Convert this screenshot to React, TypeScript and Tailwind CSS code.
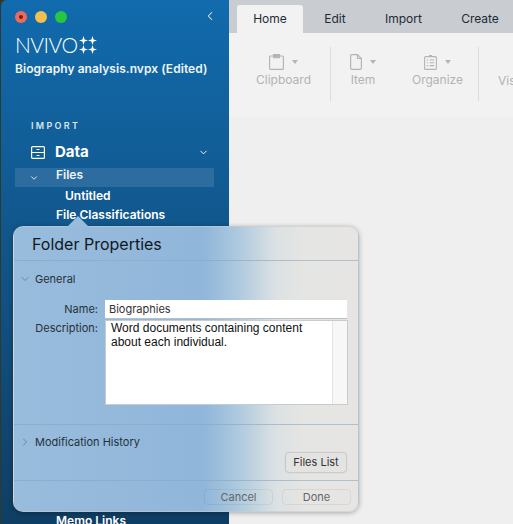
import React from "react";
import { ChevronDown, ChevronLeft, ChevronRight } from "lucide-react";

const font = { fontFamily: "Inter, 'Noto Sans', sans-serif" };

const Sparkles = () => (
  <svg width="18" height="18" viewBox="0 0 18 18" fill="white">
    <path d="M4.5 0 L5.6 3.4 L9 4.5 L5.6 5.6 L4.5 9 L3.4 5.6 L0 4.5 L3.4 3.4 Z" />
    <path d="M13.5 0 L14.6 3.4 L18 4.5 L14.6 5.6 L13.5 9 L12.4 5.6 L9 4.5 L12.4 3.4 Z" />
    <path d="M4.5 9 L5.6 12.4 L9 13.5 L5.6 14.6 L4.5 18 L3.4 14.6 L0 13.5 L3.4 12.4 Z" />
    <path d="M13.5 9 L14.6 12.4 L18 13.5 L14.6 14.6 L13.5 18 L12.4 14.6 L9 13.5 L12.4 12.4 Z" />
  </svg>
);

const DataIcon = () => (
  <svg width="14" height="13" viewBox="0 0 14 13" fill="none" stroke="white" strokeWidth="1.2">
    <rect x="0.6" y="0.6" width="12.8" height="11.8" rx="1" />
    <path d="M0.6 6.5 H13.4" />
    <path d="M5.5 3.5 H8.5 M5.5 9.5 H8.5" />
  </svg>
);

const ClipboardIcon = () => (
  <svg width="15" height="16" viewBox="0 0 15 16" fill="none" stroke="#b5b5b5" strokeWidth="1.2">
    <rect x="0.6" y="2" width="13.8" height="13.4" rx="1" />
    <rect x="4.5" y="0.6" width="6" height="3" fill="#b5b5b5" />
  </svg>
);

const PageIcon = () => (
  <svg width="12" height="16" viewBox="0 0 12 16" fill="none" stroke="#b5b5b5" strokeWidth="1.2">
    <path d="M1.6 0.6 H7.5 L11.4 4.5 V14 Q11.4 15.4 10 15.4 H2 Q0.6 15.4 0.6 14 V1.6 Q0.6 0.6 1.6 0.6 Z" />
    <path d="M7.5 0.6 V4.5 H11.4" />
  </svg>
);

const OrganizeIcon = () => (
  <svg width="13" height="15" viewBox="0 0 13 15" fill="none" stroke="#b5b5b5" strokeWidth="1.1">
    <rect x="0.6" y="1.6" width="11.8" height="12.8" rx="1" />
    <path d="M5 0.6 H8 M2.8 5 H4 M5.5 5 H10.2 M2.8 7.8 H4 M5.5 7.8 H10.2 M2.8 10.6 H4 M5.5 10.6 H10.2" />
  </svg>
);

const Caret = () => <span className="h-0 w-0 border-x-[3.5px] border-t-[4px] border-x-transparent border-t-[#b5b5b5]" />;

const Tool = ({ icon, label }: { icon: React.ReactNode; label: string }) => (
  <div className="flex flex-col items-center gap-[2px]">
    <div className="flex h-[16px] items-center gap-[8px]">
      {icon}
      <Caret />
    </div>
    <span className="text-[12px] leading-[15px] text-[#b3b3b3]">{label}</span>
  </div>
);

const Sidebar = () => (
  <aside className="flex h-[524px] w-[228px] shrink-0 flex-col overflow-hidden rounded-tl-[6px] bg-gradient-to-b from-[#116bad] to-[#0f3e64] text-white">
    <div className="flex items-center justify-between pl-[14px] pr-[12px] pt-[9px]">
      <div className="flex gap-[8px] pt-[1px]">
        <span className="flex h-[12px] w-[12px] items-center justify-center rounded-full bg-[#ed6a5e]">
          <span className="h-[4px] w-[4px] rounded-full bg-[#7a1a12]" />
        </span>
        <span className="h-[12px] w-[12px] rounded-full bg-[#f5bf4f]" />
        <span className="h-[12px] w-[12px] rounded-full bg-[#27c840]" />
      </div>
      <ChevronLeft size={14} strokeWidth={1.8} className="text-[#dce8f2]" />
    </div>
    <div className="mt-[10px] flex items-center gap-[1px] pl-[14px]">
      <span className="text-[21px] font-light leading-[24px] tracking-[-0.5px]" style={{ fontFamily: "Lato, sans-serif" }}>
        NVIVO
      </span>
      <Sparkles />
    </div>
    <div className="mt-[4px] pl-[14px] text-[12px] font-semibold leading-[16px] tracking-[0.05px] text-[#eef4f9]">
      Biography analysis.nvpx (Edited)
    </div>
    <div className="ml-[30px] mr-[21px] mt-[28px] h-px bg-[#3d80b3]" />
    <div className="mt-[15px] pl-[30px] text-[9px] font-semibold leading-[12px] tracking-[2.3px] text-[#dbe6ef]">IMPORT</div>
    <div className="mt-[9px] flex h-[22px] items-center pl-[30px] pr-[20px]">
      <DataIcon />
      <span className="ml-[10px] flex-1 text-[15px] font-bold">Data</span>
      <ChevronDown size={11} strokeWidth={2} />
    </div>
    <div className="ml-[14px] mr-[15px] mt-[5px] flex h-[19px] items-center bg-[#2d6c9f] pl-[14px]">
      <ChevronDown size={10} strokeWidth={2} />
      <span className="ml-[17px] pb-[5px] text-[12px] font-semibold text-[#eef4f9]">Files</span>
    </div>
    <div className="flex h-[20px] items-center pl-[50px] text-[12px] font-semibold">
      <span className="ml-[14px]">Untitled</span>
    </div>
    <div className="mt-[1px] flex h-[22px] items-center pl-[55px] text-[12px] font-semibold">File Classifications</div>
    <div className="mt-[288px] flex h-[22px] items-center pl-[55px] text-[12px] font-semibold">Memo Links</div>
  </aside>
);

const Ribbon = () => (
  <main className="min-w-0 flex-1 overflow-hidden bg-[#efefef]">
    <div className="flex h-[33px] items-end bg-[#c9ccd0] pl-[8px] text-[12px] text-[#1d2b38]">
      <div className="flex h-[28px] w-[66px] shrink-0 items-center justify-center rounded-t-[3px] bg-[#f2f2f2]">Home</div>
      <div className="flex h-[28px] w-[64px] shrink-0 items-center justify-center">Edit</div>
      <div className="flex h-[28px] w-[73px] shrink-0 items-center justify-center">Import</div>
      <div className="flex h-[28px] w-[80px] shrink-0 items-center justify-center">Create</div>
    </div>
    <div className="flex h-[84px] items-start whitespace-nowrap bg-[#f2f2f2] pt-[14px]">
      <div className="flex h-[54px] w-[102px] shrink-0 justify-center border-r border-[#dcdcdc] pl-[8px] pt-[7px]">
        <Tool icon={<ClipboardIcon />} label="Clipboard" />
      </div>
      <div className="flex h-[54px] w-[148px] shrink-0 gap-[36px] border-r border-[#dcdcdc] pl-[19px] pt-[7px]">
        <Tool icon={<PageIcon />} label="Item" />
        <Tool icon={<OrganizeIcon />} label="Organize" />
      </div>
      <div className="shrink-0 pl-[19px] pt-[26px] text-[12px] leading-[15px] text-[#b3b3b3]">Visualize</div>
    </div>
  </main>
);

const DialogButton = ({ label, className }: { label: string; className: string }) => (
  <div className={`flex h-[16px] items-center justify-center rounded-[4px] border border-[#0000000f] text-[11px] text-[#666] ${className}`}>
    {label}
  </div>
);

const Dialog = () => (
  <div className="absolute left-[13px] top-[226px] z-10 flex h-[286px] w-[346px] flex-col rounded-[10px] border border-[#c9c9c9]/60 bg-[linear-gradient(90deg,#98bcdc_0%,#90b6da_55%,#a9c7de_64%,#dbe1e3_76%,#e5e5e3_84%,#e6e5e3_100%)] text-[#27313a] shadow-[0_1px_5px_rgba(0,0,0,0.3)]">
    <span className="absolute left-[53px] top-[-11px] h-0 w-0 border-x-[11px] border-b-[11px] border-x-transparent border-b-[#98bcdc]" />
    <div className="flex h-[34px] items-center border-b border-[#8aa5bd]/60 pl-[18px] text-[16px] leading-[20px] text-[#10181f]">
      Folder Properties
    </div>
    <div className="mt-[9px] flex h-[18px] items-center pl-[5px] text-[11px]">
      <ChevronDown size={12} strokeWidth={1.5} className="text-[#5f7488]" />
      <span className="ml-[4px]">General</span>
    </div>
    <div className="mt-[12px] flex items-center">
      <span className="w-[84px] text-right text-[11px]">Name:</span>
      <div className="ml-[7px] flex h-[18px] w-[242px] items-center bg-white pl-[4px] text-[11px] text-[#333] shadow-[0_1px_0_#b8c0c6]">
        Biographies
      </div>
    </div>
    <div className="mt-[2px] flex items-start">
      <span className="w-[84px] text-right text-[11px]">Description:</span>
      <div className="ml-[7px] flex h-[85px] w-[243px] border border-[#c7ccd0] bg-white text-[12px] leading-[14px] text-[#111]">
        <div className="flex-1 px-[5px]" style={{ fontFamily: "'Liberation Sans', sans-serif" }}>
          Word documents containing content
          <br />
          about each individual.
        </div>
        <div className="w-[15px] border-l border-[#e4e4e4] bg-[#f7f7f7]" />
      </div>
    </div>
    <div className="mt-[19px] h-px bg-[#8aa5bd]/60" />
    <div className="mt-[9px] flex h-[16px] items-center pl-[5px] text-[11px]">
      <ChevronRight size={12} strokeWidth={1.5} className="text-[#5f7488]" />
      <span className="ml-[4px]">Modification History</span>
    </div>
    <div className="mt-[3px] flex justify-end pr-[12px]">
      <div className="flex h-[19px] w-[60px] items-center justify-center rounded-[3px] bg-[#e3e3e2] text-[11px] text-[#333] shadow-[0_0_2px_rgba(0,0,0,0.4)]">
        Files List
      </div>
    </div>
    <div className="mt-[8px] h-px bg-[#8aa5bd]/60" />
    <div className="mt-[8px] flex gap-[9px] pl-[190px]">
      <DialogButton label="Cancel" className="w-[69px]" />
      <DialogButton label="Done" className="w-[69px]" />
    </div>
  </div>
);

export default function App() {
  return (
    <div className="relative flex h-[524px] w-[513px] overflow-hidden bg-[#2f3a2c] pl-px" style={font}>
      <Sidebar />
      <Ribbon />
      <Dialog />
    </div>
  );
}
